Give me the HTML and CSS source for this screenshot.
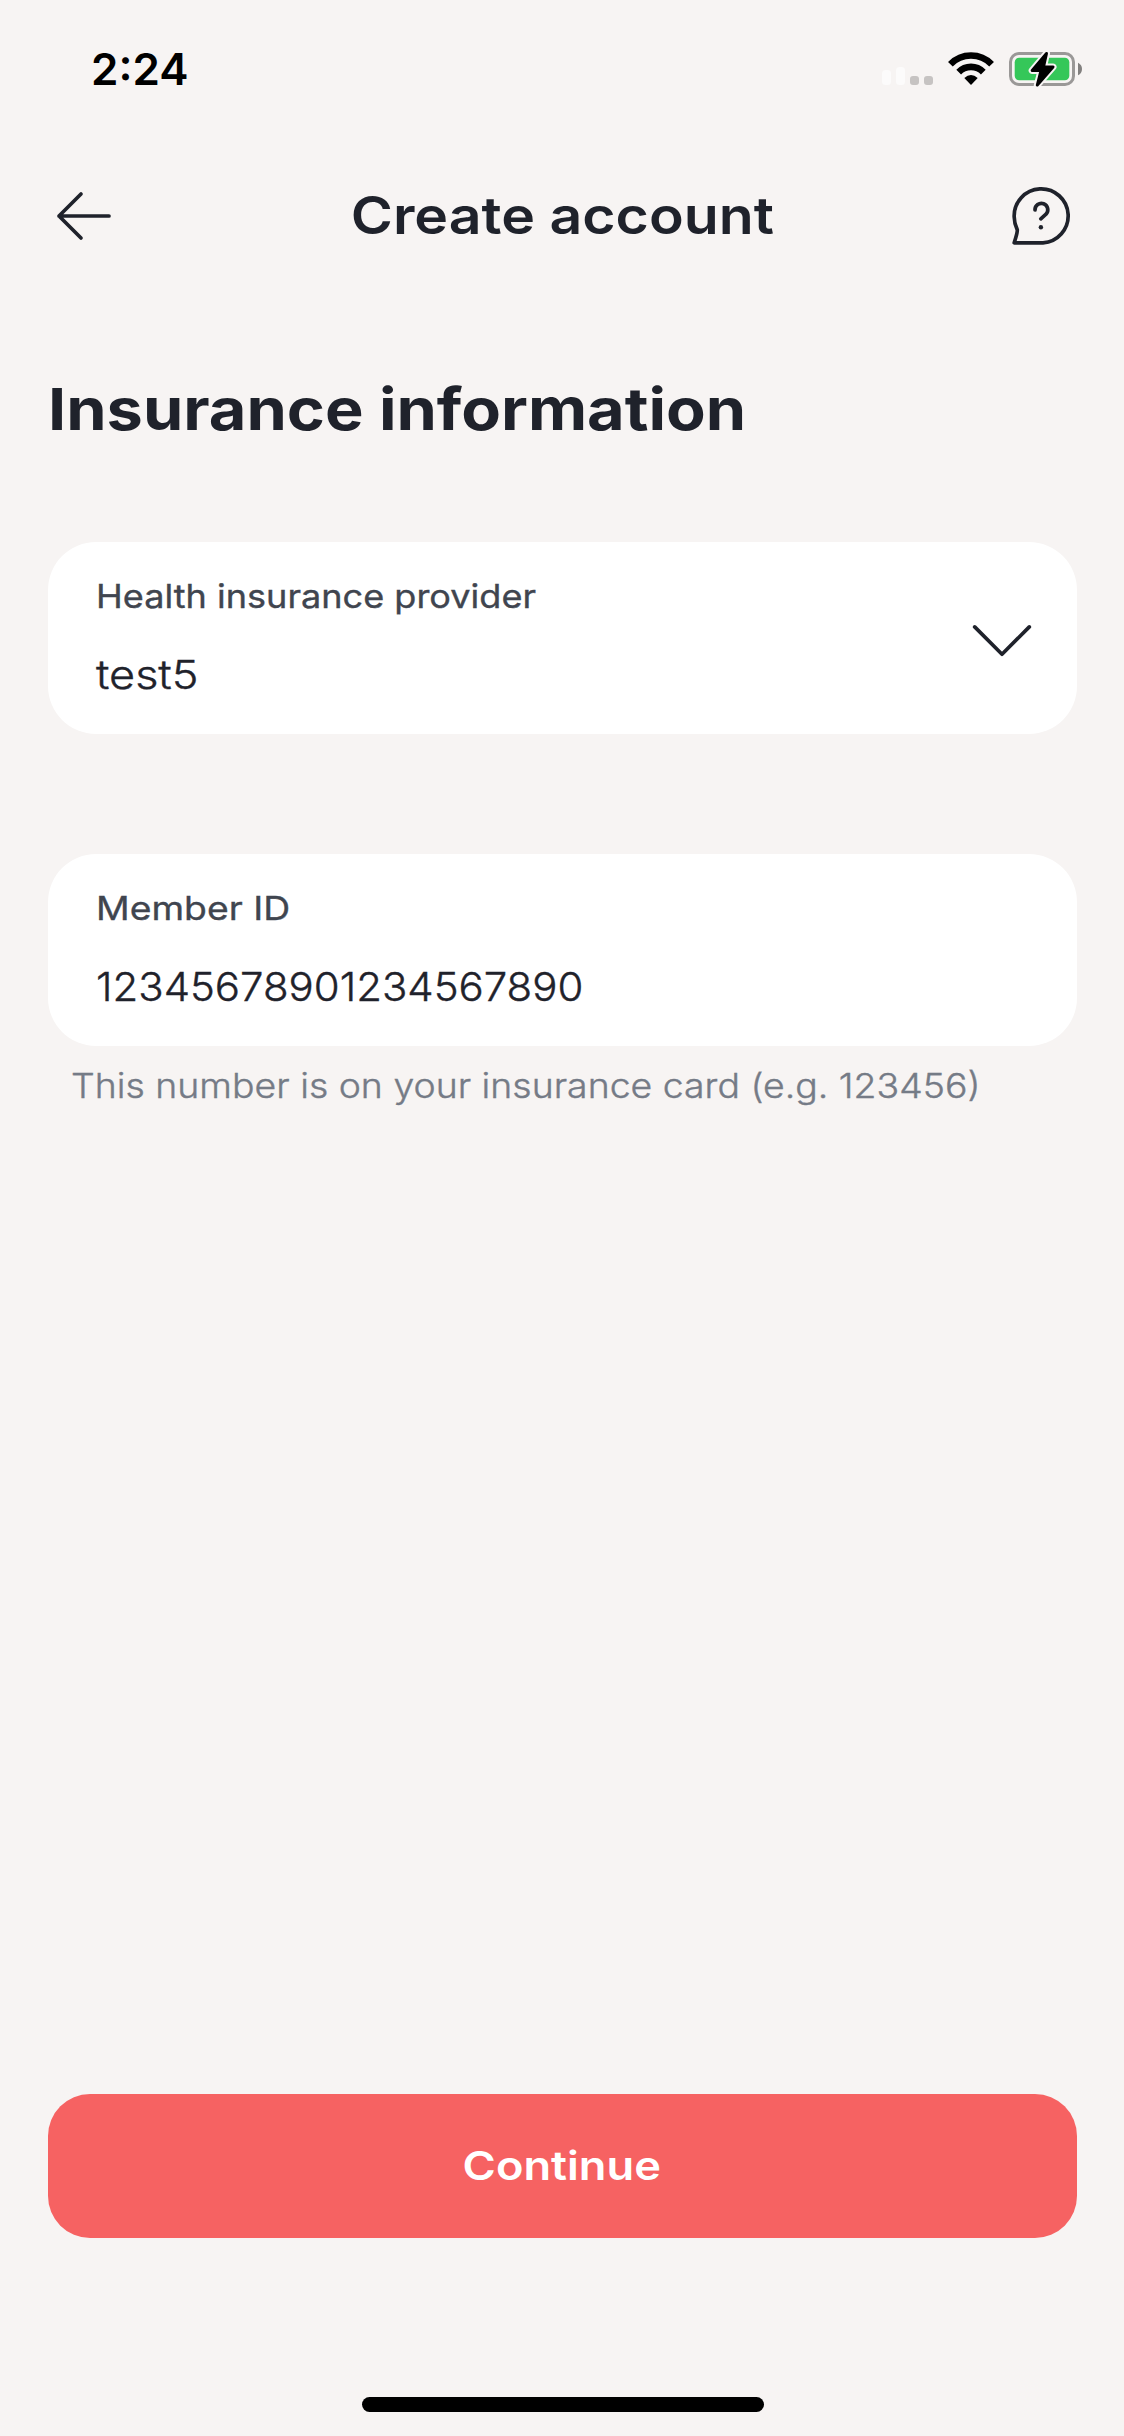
FILE: index.html
```html
<!DOCTYPE html>
<html lang="en">
<head>
<meta charset="utf-8">
<title>Create account</title>
<link rel="stylesheet" href="styles.css">
</head>
<body>
<div class="screen">
  <div class="status-bar">
    <span class="time">2:24</span>
    <svg class="status-icons" viewBox="880 44 204 50" aria-hidden="true">
      <rect class="signal-faint" x="882" y="70" width="9" height="15" rx="3.5"/>
      <rect class="signal-faint" x="896" y="67" width="9" height="18" rx="3.5"/>
      <rect class="signal-off" x="910" y="76" width="9" height="9" rx="3"/>
      <rect class="signal-off" x="924" y="76" width="9" height="9" rx="3"/>
      <g class="wifi">
        <path d="M950.4 64.2A28.7 28.7 0 0 1 991.6 64.2"/>
        <path d="M958.7 72.1A17.2 17.2 0 0 1 983.3 72.1"/>
        <path class="wifi-dot" d="M971 85L964.3 78Q971 71.8 977.7 78Z"/>
      </g>
      <rect class="battery-case" x="1010.5" y="53.5" width="63" height="31" rx="8.5"/>
      <rect class="battery-level" x="1014.7" y="57.7" width="54.6" height="22.6" rx="4.5"/>
      <path class="battery-cap" d="M1078 62.7Q1082 64.7 1082 69T1078 75.3Z"/>
      <path class="bolt-halo" d="M1046.5 53.5L1032.2 70.5H1041L1037.3 85L1053 67H1043.5Z"/>
      <path class="bolt" d="M1046.5 53.5L1032.2 70.5H1041L1037.3 85L1053 67H1043.5Z"/>
    </svg>
  </div>

  <header class="nav">
    <svg class="icon nav-icon" viewBox="48 184 64 64" role="img" aria-label="Back">
      <path d="M81 194L59 216L81 238M59 216H109"/>
    </svg>
    <h1 class="nav-title">Create account</h1>
    <svg class="icon nav-icon" viewBox="1012 184 64 64" role="img" aria-label="Help">
      <path d="M1014.2 242.8H1043A27 27 0 1 0 1014.2 217C1014.4 224 1016 227 1017.2 229.5C1017.8 231.8 1016.8 234 1014.2 242.8Z"/>
      <path d="M1035 210A6.4 6.4 0 1 1 1046 214.2L1040.8 218.8"/>
      <circle class="dot" cx="1040.9" cy="227.3" r="2.2"/>
    </svg>
  </header>

  <main class="content">
    <h2 class="heading">Insurance information</h2>

    <div class="field">
      <div class="field-text">
        <span class="label">Health insurance provider</span>
        <span class="value value-word">test5</span>
      </div>
      <svg class="icon chevron" viewBox="970 620 64 40" aria-hidden="true">
        <path d="M974.7 626.9L1002 654.3L1029.3 626.9"/>
      </svg>
    </div>

    <div class="field">
      <div class="field-text">
        <span class="label label-short">Member ID</span>
        <span class="value">12345678901234567890</span>
      </div>
    </div>
    <p class="hint">This number is on your insurance card (e.g. 123456)</p>
  </main>

  <button class="continue" type="button"><span class="continue-text">Continue</span></button>
  <div class="home-indicator"></div>
</div>
</body>
</html>
```
FILE: styles.css
```css
* {
  box-sizing: border-box;
}

body {
  margin: 0;
  background: #f7f4f3;
  color: #1f222b;
  font-family: Inter, "Liberation Sans", sans-serif;
}

.screen {
  display: flex;
  flex-direction: column;
  width: 1124px;
  height: 2436px;
  padding: 0 47px 24px 48px;
}

/* Status bar */
.status-bar {
  display: flex;
  align-items: center;
  justify-content: space-between;
  height: 138px;
  margin: 0 -7px 0 43px;
}

.time {
  color: #000;
  font-size: 44px;
  font-weight: 600;
  line-height: 50px;
}

.status-icons {
  width: 204px;
  height: 50px;
}

.signal-faint { fill: #fcfbfb; }
.signal-off { fill: #c6c3c2; }

.wifi path {
  fill: none;
  stroke: #000;
  stroke-width: 6.6;
}

.wifi .wifi-dot {
  fill: #000;
  stroke: none;
}

.battery-case {
  fill: none;
  stroke: #9a9897;
  stroke-width: 3;
}

.battery-level { fill: #35c759; }
.battery-cap { fill: #82807f; }

.bolt {
  fill: #000;
  stroke: #000;
  stroke-width: 3;
  stroke-linejoin: round;
}

.bolt-halo {
  fill: #f7f4f3;
  stroke: #f7f4f3;
  stroke-width: 7;
  stroke-linejoin: round;
}

/* Navigation */
.nav {
  display: flex;
  align-items: center;
  justify-content: space-between;
  height: 156px;
}

.icon {
  fill: none;
  stroke: #1f222b;
  stroke-width: 3.7;
  stroke-linecap: round;
  stroke-linejoin: round;
}

.icon .dot {
  fill: #1f222b;
  stroke: none;
}

.nav-icon {
  width: 64px;
  height: 64px;
}

.nav .nav-icon:last-child {
  margin-right: 1px;
}

.nav-title {
  margin: 0;
  font-size: 52px;
  font-weight: 600;
  line-height: 64px;
  transform: scaleX(1.1);
}

/* Form */
.content {
  display: flex;
  flex-direction: column;
  flex: 1;
}

.heading {
  align-self: flex-start;
  margin: 80px 0 98px;
  font-size: 58px;
  font-weight: 700;
  line-height: 70px;
  transform: scaleX(1.118);
  transform-origin: left;
}

.field {
  display: flex;
  align-items: center;
  justify-content: space-between;
  height: 192px;
  padding: 0 43px 0 48px;
  border-radius: 48px;
  background: #fff;
}

.field + .field {
  margin-top: 120px;
}

.field-text {
  display: flex;
  flex-direction: column;
  align-items: flex-start;
  gap: 35px;
  padding-bottom: 1px;
}

.label {
  color: #40454f;
  font-size: 33px;
  font-weight: 400;
  line-height: 40px;
  -webkit-text-stroke: 0.35px;
  transform: scaleX(1.093);
  transform-origin: left;
}

.label-short {
  transform: scaleX(1.13);
}

.value {
  font-size: 40px;
  font-weight: 300;
  line-height: 48px;
  -webkit-text-stroke: 0.4px;
  transform: scaleX(1.048);
  transform-origin: left;
}

.value-word {
  transform: scaleX(1.125);
}

.chevron {
  width: 64px;
  height: 40px;
  margin-top: 4px;
}

.hint {
  align-self: flex-start;
  margin: 18px 0 0 23px;
  color: #757b86;
  font-size: 34.5px;
  font-weight: 300;
  line-height: 44px;
  white-space: nowrap;
  -webkit-text-stroke: 0.4px;
  transform: scaleX(1.084);
  transform-origin: left;
}

/* Bottom action */
.continue {
  height: 144px;
  padding: 0 2px 0 0;
  border: 0;
  border-radius: 42px;
  background: #f66262;
  color: #fff;
  font-family: inherit;
  font-size: 40px;
  font-weight: 600;
  line-height: 48px;
}

.continue-text {
  display: inline-block;
  transform: scaleX(1.13);
}

.home-indicator {
  width: 402px;
  height: 15px;
  margin: 159px 0 0 314px;
  border-radius: 8px;
  background: #000;
}
```
